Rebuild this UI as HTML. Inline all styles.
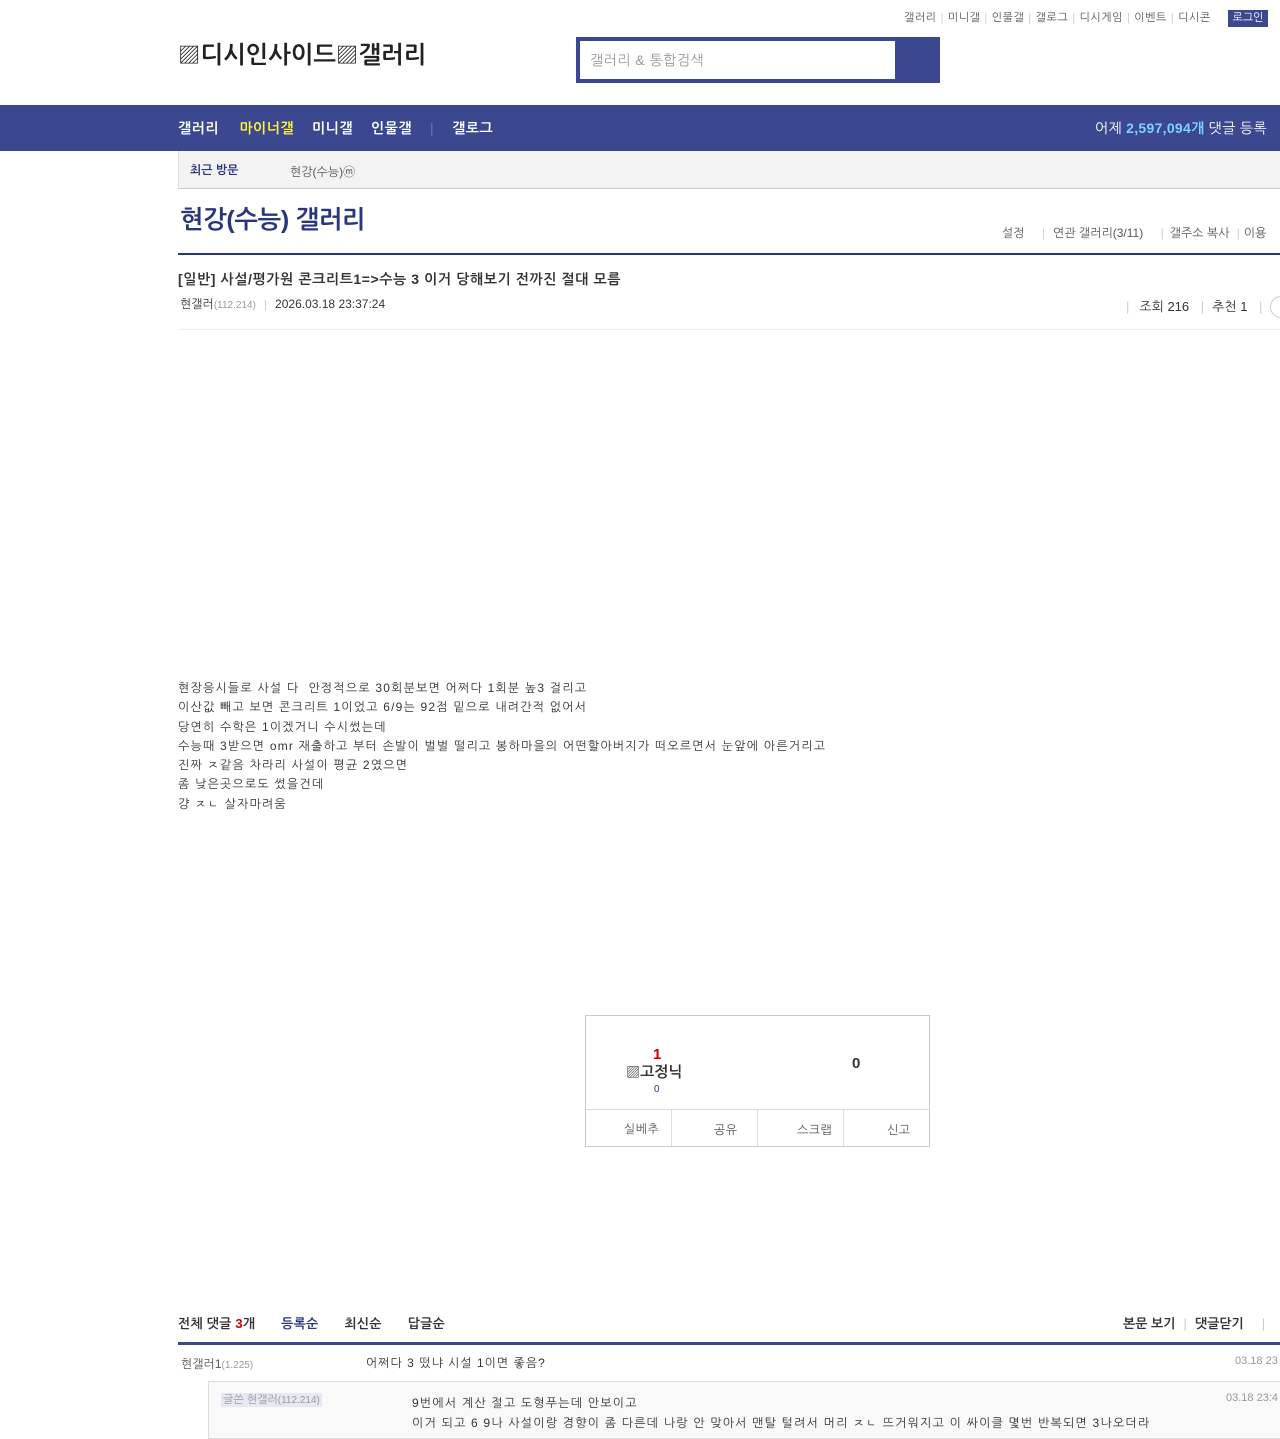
<!DOCTYPE html>
<html><head><meta charset="utf-8">
<style>
*{margin:0;padding:0;box-sizing:border-box}
body{width:1280px;height:1439px;overflow:hidden;background:#fff;font-family:"Liberation Sans","NanumGothic",sans-serif;color:#333;position:relative;letter-spacing:0.5px}
.a{position:absolute;white-space:nowrap}
.top{font-size:11px;color:#555}
.top span.s{color:#ccc;margin:0 4px}
.ct{letter-spacing:1.2px}
</style></head><body>
<div class="a top" style="left:904px;top:11px">갤러리<span class="s">|</span>미니갤<span class="s">|</span>인물갤<span class="s">|</span>갤로그<span class="s">|</span>디시게임<span class="s">|</span>이벤트<span class="s">|</span>디시콘</div>
<div class="a" style="left:1228px;top:10px;width:40px;height:17px;background:#3b4890;color:#fff;font-size:11px;text-align:center;line-height:17px;letter-spacing:0">로그인</div>
<div class="a" style="left:178px;top:42px;font-size:24px;font-weight:bold;color:#222;letter-spacing:0">▨디시인사이드▨갤러리</div>
<div class="a" style="left:576px;top:37px;width:364px;height:46px;background:#3b4890"></div>
<div class="a" style="left:580px;top:41px;width:315px;height:38px;background:#fff;font-size:14px;color:#999;line-height:38px;padding-left:10px">갤러리 &amp; 통합검색</div>
<div class="a" style="left:0;top:105px;width:1280px;height:46px;background:#3b4890"></div>
<div class="a" style="left:178px;top:120px;font-size:14px;font-weight:bold;color:#fff">갤러리 <span style="color:#ffef3f;margin-left:16px">마이너갤</span><span style="margin-left:18px">미니갤</span><span style="margin-left:18px">인물갤</span><span style="color:#6b77b3;margin-left:18px;font-weight:normal">|</span><span style="margin-left:18px">갤로그</span></div>
<div class="a" style="left:1095px;top:120px;font-size:14px;color:#fff;letter-spacing:0.3px">어제 <b style="color:#7bd3ff">2,597,094개</b> 댓글 등록</div>
<div class="a" style="left:178px;top:151px;width:1102px;height:38px;background:#f3f3f3;border-left:1px solid #ddd;border-bottom:1px solid #ccc"></div>
<div class="a" style="left:190px;top:163px;font-size:12px;font-weight:bold;color:#29367c;letter-spacing:0">최근 방문</div>
<div class="a" style="left:290px;top:163px;font-size:12px;color:#555;letter-spacing:0">현강(수능)ⓜ</div>
<div class="a" style="left:180px;top:206px;font-size:25px;font-weight:bold;color:#29367c;letter-spacing:-0.3px">현강(수능) 갤러리</div>
<div class="a" style="left:1002px;top:226px;font-size:12px;color:#555;letter-spacing:0">설정 <span style="color:#ccc;margin:0 8px 0 14px">|</span>연관 갤러리(3/11) <span style="color:#ccc;margin:0 6px 0 14px">|</span>갤주소 복사 <span style="color:#ccc;margin:0 4px">|</span>이용</div>
<div class="a" style="left:178px;top:253px;width:1102px;height:2px;background:#29367c"></div>
<div class="a" style="left:178px;top:271px;font-size:14px;font-weight:bold;color:#333;letter-spacing:0.6px">[일반] 사설/평가원 콘크리트1=&gt;수능 3 이거 당해보기 전까진 절대 모름</div>
<div class="a" style="left:180px;top:297px;font-size:12px;color:#333;letter-spacing:0">현갤러<span style="color:#999;font-size:10px">(112.214)</span><span style="color:#ccc;margin:0 8px">|</span>2026.03.18 23:37:24</div>
<div class="a" style="left:1126px;top:299px;font-size:13px;color:#333;letter-spacing:0"><span style="color:#ccc;margin-right:10px">|</span>조회 216 <span style="color:#ccc;margin:0 8px">|</span>추천 1 <span style="color:#ccc;margin:0 8px">|</span></div>
<div class="a" style="left:1270px;top:296px;width:24px;height:22px;border:1px solid #ccc;border-radius:12px"></div>
<div class="a" style="left:178px;top:329px;width:1102px;height:1px;background:#eee"></div>
<div class="a ct" style="left:178px;top:679px;font-size:12px;line-height:19.3px;color:#333">현장응시들로 사설 다 &nbsp;안정적으로 30회분보면 어쩌다 1회분 높3 걸리고<br>이산값 빼고 보면 콘크리트 1이었고 6/9는 92점 밑으로 내려간적 없어서<br>당연히 수학은 1이겠거니 수시썼는데<br>수능때 3받으면 omr 재출하고 부터 손발이 벌벌 떨리고 봉하마을의 어떤할아버지가 떠오르면서 눈앞에 아른거리고<br>진짜 ㅈ같음 차라리 사설이 평균 2였으면<br>좀 낮은곳으로도 썼을건데<br>걍 ㅈㄴ 살자마려움</div>
<div class="a" style="left:585px;top:1015px;width:345px;height:132px;border:1px solid #ccc"></div>
<div class="a" style="left:586px;top:1109px;width:343px;height:1px;background:#ddd"></div>
<div class="a" style="left:653px;top:1046px;font-size:15px;font-weight:bold;color:#c00">1</div>
<div class="a" style="left:626px;top:1064px;font-size:15px;font-weight:bold;color:#333;letter-spacing:0">▨고정닉</div>
<div class="a" style="left:654px;top:1084px;font-size:10px;color:#29367c">0</div>
<div class="a" style="left:852px;top:1055px;font-size:15px;font-weight:bold;color:#333">0</div>
<div class="a" style="left:671px;top:1110px;width:1px;height:36px;background:#ddd"></div>
<div class="a" style="left:757px;top:1110px;width:1px;height:36px;background:#ddd"></div>
<div class="a" style="left:843px;top:1110px;width:1px;height:36px;background:#ddd"></div>
<div class="a" style="left:624px;top:1122px;font-size:12px;color:#555">실베추</div>
<div class="a" style="left:714px;top:1123px;font-size:12px;color:#555">공유</div>
<div class="a" style="left:797px;top:1123px;font-size:12px;color:#555">스크랩</div>
<div class="a" style="left:887px;top:1123px;font-size:12px;color:#555">신고</div>
<div class="a" style="left:178px;top:1316px;font-size:13px;font-weight:bold;color:#333;letter-spacing:0.2px">전체 댓글 <span style="color:#c00">3</span>개<span style="color:#29367c;margin-left:26px">등록순</span><span style="margin-left:26px">최신순</span><span style="margin-left:26px">답글순</span></div>
<div class="a" style="left:1123px;top:1316px;font-size:13px;font-weight:bold;color:#333;letter-spacing:0">본문 보기<span style="color:#ccc;font-weight:normal;margin:0 8px">|</span>댓글닫기<span style="color:#ccc;font-weight:normal;margin-left:18px">|</span></div>
<div class="a" style="left:178px;top:1342px;width:1102px;height:3px;background:#3b4890"></div>
<div class="a" style="left:181px;top:1357px;font-size:12px;color:#555;letter-spacing:0">현갤러1<span style="color:#999;font-size:10px">(1.225)</span></div>
<div class="a" style="left:366px;top:1356px;font-size:12px;color:#333;letter-spacing:1px">어쩌다 3 떴냐 시설 1이면 좋음?</div>
<div class="a" style="left:1235px;top:1355px;font-size:11px;color:#999;letter-spacing:0">03.18 23</div>
<div class="a" style="left:208px;top:1381px;width:1072px;height:58px;background:#f9f9f9;border:1px solid #ddd;border-right:none"></div>
<div class="a" style="left:221px;top:1393px;font-size:11px;color:#999;background:#e6e9f3;padding:0 2px;letter-spacing:0">글쓴 현갤러<span style="font-size:10px">(112.214)</span></div>
<div class="a ct" style="left:412px;top:1393px;font-size:12px;line-height:20px;color:#333">9번에서 계산 절고 도형푸는데 안보이고<br>이거 되고 6 9나 사설이랑 경향이 좀 다른데 나랑 안 맞아서 맨탈 털려서 머리 ㅈㄴ 뜨거워지고 이 싸이클 몇번 반복되면 3나오더라</div>
<div class="a" style="left:1226px;top:1392px;font-size:11px;color:#999;letter-spacing:0">03.18 23:4</div>
</body></html>
